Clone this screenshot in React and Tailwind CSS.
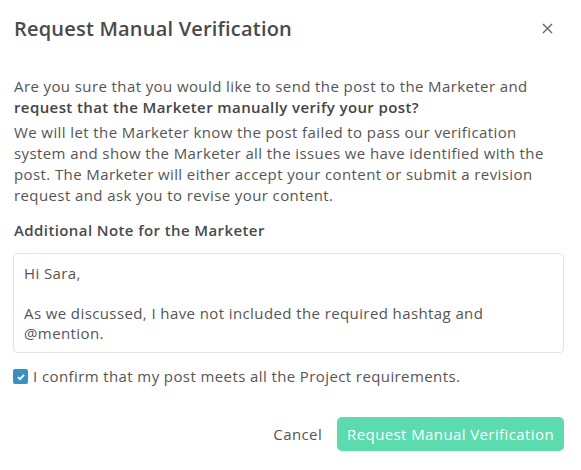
import React, { useState } from "react";

const App = () => {
  const [checked, setChecked] = useState(true);
  const [note, setNote] = useState(
    "Hi Sara,\n\nAs we discussed, I have not included the required hashtag and @mention."
  );

  return (
    <div
      className="w-[581px] h-[470px] bg-white text-[#555555] tracking-[0.4px]"
      style={{ fontFamily: "'Open Sans', Lato, sans-serif" }}
    >
      {/* HEADER */}
      <div className="flex items-center justify-between pl-[14px] pr-[28px] pt-[16px]">
        <h2 className="text-[20px] leading-[26px] font-semibold text-[#4a4a4a] tracking-[0.2px]">
          Request Manual Verification
        </h2>
        <button className="text-[#666] -mt-[2px]">
          <svg width="11" height="11" viewBox="0 0 11 11" fill="none" stroke="currentColor" strokeWidth="1.4">
            <path d="M1 1l9 9M10 1l-9 9" />
          </svg>
        </button>
      </div>

      {/* BODY */}
      <div className="px-[14px] pt-[34px] text-[15px] leading-[21px]">
        <p>
          Are you sure that you would like to send the post to the Marketer and{" "}
          <span className="font-semibold text-[#444]">
            request that the Marketer manually verify your post?
          </span>
        </p>
        <p className="mt-[4px]">
          We will let the Marketer know the post failed to pass our verification system and show the
          Marketer all the issues we have identified with the post. The Marketer will either accept
          your content or submit a revision request and ask you to revise your content.
        </p>

        <label className="block mt-[14px] font-semibold text-[#4a4a4a]">
          Additional Note for the Marketer
        </label>
        <textarea
          value={note}
          onChange={(e) => setNote(e.target.value)}
          className="block w-[551px] h-[100px] mt-[12px] -ml-[1px] pl-[10px] pr-[40px] py-[9px] border border-[#e3e3e3] rounded-[4px] resize-none text-[15px] leading-[20px] text-[#555] outline-none"
        />

        <label className="flex items-center gap-[5px] mt-[13px] -ml-[1px]">
          <span
            onClick={() => setChecked(!checked)}
            className="w-[15px] h-[15px] rounded-[2px] bg-[#3a90c2] flex items-center justify-center"
          >
            {checked && (
              <svg width="10" height="10" viewBox="0 0 10 10" fill="none" stroke="white" strokeWidth="1.8">
                <path d="M2 5.2l2 2 4-4.4" />
              </svg>
            )}
          </span>
          <span>I confirm that my post meets all the Project requirements.</span>
        </label>
      </div>

      {/* FOOTER */}
      <div className="flex items-center justify-end gap-[15px] pr-[17px] mt-[30px]">
        <button className="text-[15px] text-[#555]">Cancel</button>
        <button className="h-[34px] px-[10px] rounded-[5px] bg-[#5bdbae] text-white text-[15px]">
          Request Manual Verification
        </button>
      </div>
    </div>
  );
};

export default App;
